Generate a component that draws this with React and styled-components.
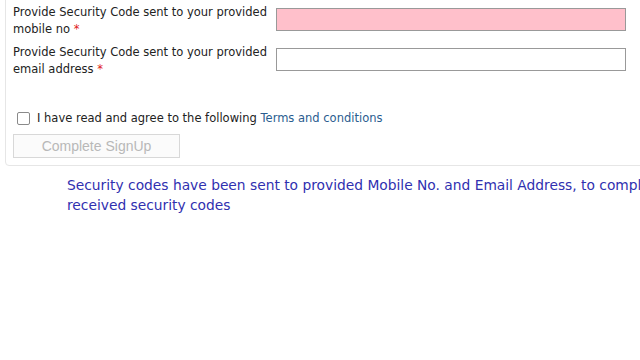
import React from "react";
import styled, { createGlobalStyle } from "styled-components";

const Global = createGlobalStyle`
  html, body { margin: 0; padding: 0; background: #fff; overflow: hidden; }
  body { width: 640px; height: 360px; font-family: "DejaVu Sans", "Open Sans", sans-serif; }
`;

const Page = styled.div`
  width: 640px;
  height: 360px;
  overflow: hidden;
  position: relative;
`;

const Panel = styled.div`
  margin: -8px 0 0 5px;
  width: 700px;
  border: 1px solid #e6e6e6;
  border-radius: 4px;
  padding: 11px 0 7px 7px;
  box-sizing: border-box;
`;

const FieldRow = styled.div`
  display: grid;
  grid-template-columns: 263px 350px;
  align-items: start;
  margin-bottom: 6px;
`;

const Label = styled.div`
  font-size: 11.5px;
  line-height: 17px;
  height: 34px;
  color: #222;
  white-space: nowrap;
`;

const Req = styled.span`
  color: #e02020;
`;

const CodeInput = styled.div`
  margin-top: 4px;
  height: 23px;
  box-sizing: border-box;
  border: 1px solid #999;
  background: ${(p) => (p.$invalid ? "#ffc0cb" : "#fff")};
`;

const AgreeRow = styled.div`
  display: flex;
  align-items: center;
  gap: 7px;
  margin: 32px 0 0 4px;
  font-size: 11.5px;
  line-height: 17px;
  color: #222;
`;

const Box = styled.span`
  width: 13px;
  height: 13px;
  box-sizing: border-box;
  border: 1px solid #8a8a8a;
  border-radius: 2px;
  background: #fff;
`;

const Link = styled.span`
  color: #2a5d8f;
`;

const Button = styled.div`
  margin-top: 7px;
  width: 167px;
  height: 24px;
  box-sizing: border-box;
  border: 1px solid #d8d8d8;
  background: #fbfbfb;
  color: #b8b8b8;
  font-family: "Liberation Sans", Arial, sans-serif;
  font-size: 14px;
  display: flex;
  align-items: center;
  justify-content: center;
`;

const Message = styled.p`
  margin: 9px 0 0 67px;
  width: 900px;
  font-size: 13.8px;
  line-height: 20px;
  color: #3030b0;
`;

export default function App() {
  return (
    <Page>
      <Global />
      <Panel>
        <FieldRow>
          <Label>
            Provide Security Code sent to your provided
            <br />
            mobile no <Req>*</Req>
          </Label>
          <CodeInput $invalid />
        </FieldRow>
        <FieldRow>
          <Label>
            Provide Security Code sent to your provided
            <br />
            email address <Req>*</Req>
          </Label>
          <CodeInput />
        </FieldRow>
        <AgreeRow>
          <Box />
          <span>
            I have read and agree to the following <Link>Terms and conditions</Link>
          </span>
        </AgreeRow>
        <Button>Complete SignUp</Button>
      </Panel>
      <Message>
        Security codes have been sent to provided Mobile No. and Email Address, to complete signup please enter
        <br />
        received security codes
      </Message>
    </Page>
  );
}
